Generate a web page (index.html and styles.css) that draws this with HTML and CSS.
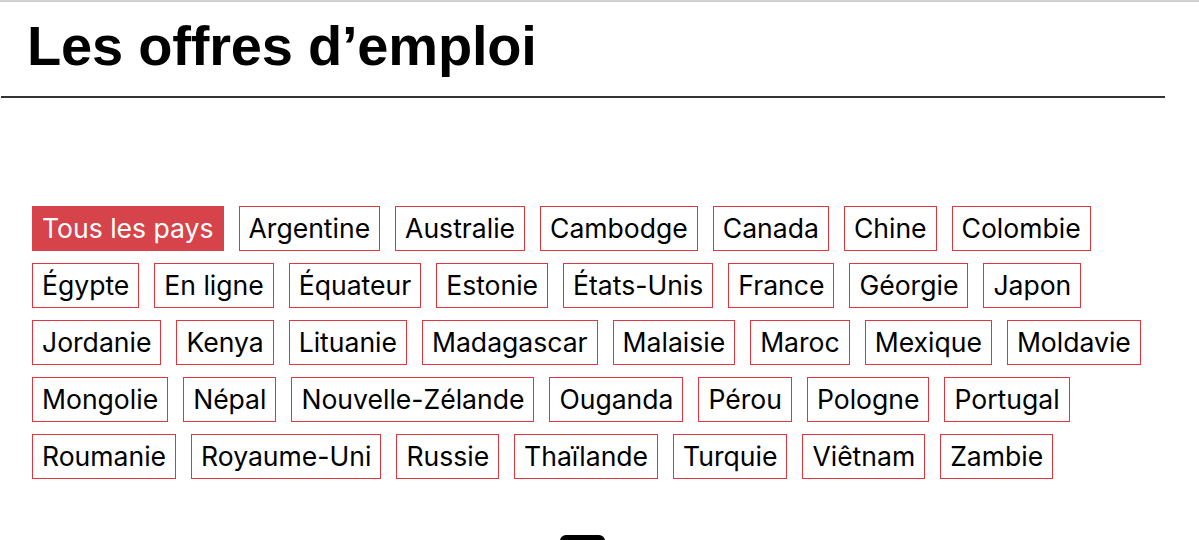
FILE: index.html
```html
<!DOCTYPE html>
<html lang="fr">
<head>
<meta charset="utf-8">
<title>Les offres d’emploi</title>
<link rel="stylesheet" href="styles.css">
</head>
<body>
<header class="header">
  <h1 class="title">Les offres d’emploi</h1>
</header>
<section class="filters">
  <ul class="tags">
    <li class="tag tag-active">Tous les pays</li>
    <li class="tag">Argentine</li>
    <li class="tag">Australie</li>
    <li class="tag">Cambodge</li>
    <li class="tag">Canada</li>
    <li class="tag">Chine</li>
    <li class="tag">Colombie</li>
    <li class="tag">Égypte</li>
    <li class="tag">En ligne</li>
    <li class="tag">Équateur</li>
    <li class="tag">Estonie</li>
    <li class="tag">États-Unis</li>
    <li class="tag">France</li>
    <li class="tag">Géorgie</li>
    <li class="tag">Japon</li>
    <li class="tag">Jordanie</li>
    <li class="tag">Kenya</li>
    <li class="tag">Lituanie</li>
    <li class="tag">Madagascar</li>
    <li class="tag">Malaisie</li>
    <li class="tag">Maroc</li>
    <li class="tag">Mexique</li>
    <li class="tag">Moldavie</li>
    <li class="tag">Mongolie</li>
    <li class="tag">Népal</li>
    <li class="tag">Nouvelle-Zélande</li>
    <li class="tag">Ouganda</li>
    <li class="tag">Pérou</li>
    <li class="tag">Pologne</li>
    <li class="tag">Portugal</li>
    <li class="tag">Roumanie</li>
    <li class="tag">Royaume-Uni</li>
    <li class="tag">Russie</li>
    <li class="tag">Thaïlande</li>
    <li class="tag">Turquie</li>
    <li class="tag">Viêtnam</li>
    <li class="tag">Zambie</li>
  </ul>
  <div class="more"><span class="more-btn"></span></div>
</section>
</body>
</html>
```
FILE: styles.css
```css
html, body {
  margin: 0;
  padding: 0;
  background: #fff;
  color: #000;
}
body {
  border-top: 2px solid #d0d0d0;
  overflow: hidden;
  height: 538px;
}
.header {
  width: 1164px;
  margin-left: 1px;
  border-bottom: 2px solid #333;
  padding: 16px 0 22px 26px;
  box-sizing: border-box;
}
.title {
  margin: 0;
  font-family: "Liberation Sans", Arial, sans-serif;
  font-weight: 700;
  font-size: 56px;
  line-height: 56px;
  letter-spacing: -0.2px;
}
.filters {
  padding: 108px 0 0 32px;
  width: 1166px;
  box-sizing: border-box;
}
.tags {
  list-style: none;
  margin: 0;
  padding: 0;
  display: flex;
  flex-wrap: wrap;
  gap: 12px 15px;
}
.tag {
  font-family: Inter, "Noto Sans", sans-serif;
  font-size: 26.55px;
  line-height: 43px;
  padding: 0 9px;
  border: 1px solid #e0363f;
  color: #000;
  white-space: nowrap;
}
.tag-active {
  background: #d6434a;
  border-color: #d6434a;
  color: #fff;
}
.more {
  display: flex;
  justify-content: center;
  padding-top: 56px;
}
.more-btn {
  display: block;
  width: 45px;
  height: 20px;
  background: #000;
  border-radius: 6px 6px 0 0;
  margin-left: -33px;
}
```
